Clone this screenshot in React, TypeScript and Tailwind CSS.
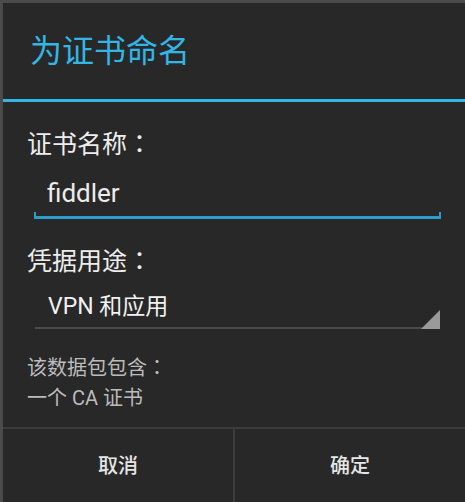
const cjk = '"Roboto", "Noto Sans CJK SC", sans-serif';
const cjkTc = '"Noto Sans CJK TC", sans-serif';

function Colon() {
  return (
    <span className="leading-none" style={{ fontFamily: cjkTc }}>
      ：
    </span>
  );
}

function Label({ text }: { text: string }) {
  return (
    <div className="h-[30px] pl-[24px] text-[25px] leading-[30px] text-[#ededed]">
      {text}
      <Colon />
    </div>
  );
}

function EditField({ value }: { value: string }) {
  return (
    <div className="ml-[31px] mr-[24px]">
      <div className="h-[32px] pl-[13px] text-[26px] leading-[32px] text-[#ececec]">{value}</div>
      {/* holo edit-text underline with end ticks */}
      <div className="mt-[3px] h-[7px] border-x-2 border-b-[3px] border-[#2b9ccb]" />
    </div>
  );
}

function SpinnerField({ value }: { value: string }) {
  return (
    <div className="relative ml-[32px] mr-[25px]">
      <div className="h-[36px] pl-[13px] text-[23px] leading-[36px] text-[#f2f2f2]">{value}</div>
      <div className="mt-[2px] h-[2px] bg-[#4a4a4a]" />
      <svg className="absolute right-0 bottom-0" width="19" height="19" viewBox="0 0 19 19">
        <polygon points="19,0 19,19 0,19" fill="#9a9a9a" />
      </svg>
    </div>
  );
}

export default function App() {
  return (
    <div
      className="flex h-[502px] w-[465px] flex-col overflow-hidden border-t-[3px] border-l-[3px] border-[#4b4b4b] bg-[#282828]"
      style={{ fontFamily: cjk }}
    >
      <div className="flex h-[96px] items-center pl-[27px] text-[32px] text-[#33b5e5]">为证书命名</div>
      <div className="h-[3px] bg-[#33b5e5]" />

      <div className="flex-1">
        <div className="mt-[28px]">
          <Label text="证书名称" />
        </div>
        <div className="mt-[17px]">
          <EditField value="fiddler" />
        </div>

        <div className="mt-[28px]">
          <Label text="凭据用途" />
        </div>
        <div className="mt-[12px]">
          <SpinnerField value="VPN 和应用" />
        </div>

        <div className="mt-[24px] pl-[24px] text-[20px] leading-[30px] text-[#bcbcbc]">
          <div className="h-[30px]">
            该数据包包含
            <Colon />
          </div>
          <div className="h-[30px]">一个 CA 证书</div>
        </div>
      </div>

      <div className="flex h-[75px] border-t-2 border-[#3c3c3c]">
        <button className="flex flex-1 items-center justify-center text-[20px] font-medium text-[#e6e6e6]">取消</button>
        <div className="w-[2px] bg-[#3c3c3c]" />
        <button className="flex flex-1 items-center justify-center text-[20px] font-medium text-[#e6e6e6]">确定</button>
      </div>
    </div>
  );
}
